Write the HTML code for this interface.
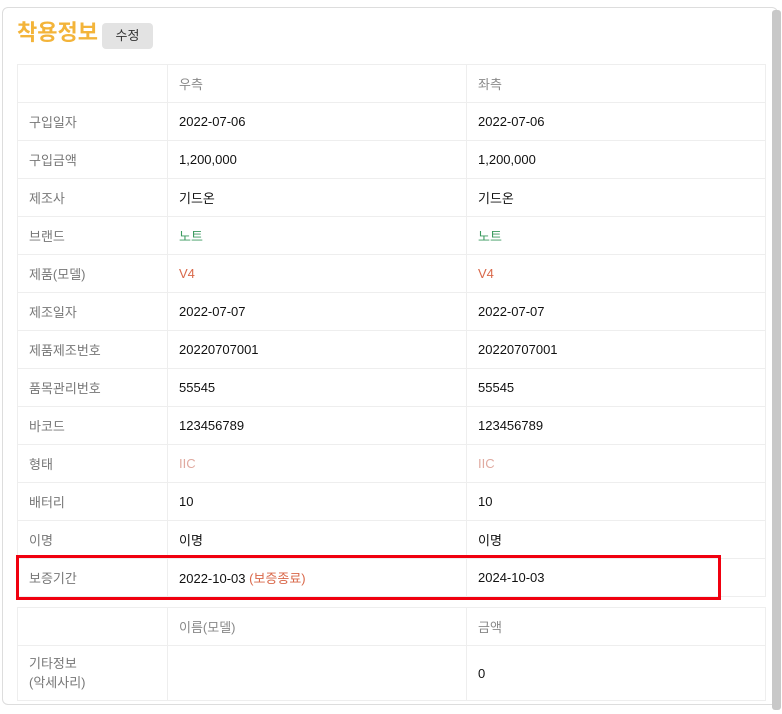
<!DOCTYPE html>
<html><head><meta charset="utf-8"><style>
body{margin:0;width:782px;height:714px;background:#fff;font-family:"Liberation Sans","Noto Sans CJK KR",sans-serif;position:relative;overflow:hidden}
.card{position:absolute;left:2px;top:7px;width:776px;height:698px;border:1px solid #ddd;border-radius:6px;box-sizing:border-box}
.sb{position:absolute;left:772px;top:10px;width:9px;height:700px;background:#c8c8c8;border-radius:3px}
h1{position:absolute;left:17px;top:18px;margin:0;font-size:22px;font-weight:bold;color:#f3b43a;line-height:30px}
.btn{position:absolute;left:102px;top:23px;width:51px;height:26px;background:#e3e3e3;border-radius:4px;font-size:13px;line-height:26px;text-align:center;color:#333}
table{position:absolute;left:17px;border-collapse:collapse;font-size:13px}
td{border:1px solid #eee;height:38px;padding:0 0 0 11px;box-sizing:border-box;color:#111}
td.l{color:#777;width:150px}
td.m{width:299px}
td.r{width:299px}
.h td{color:#888}
.g{color:#3c9b60}.o{color:#d9684a}.p{color:#e0aaa0}
.box{position:absolute;left:16px;top:555px;width:705px;height:45px;border:3px solid #f0000f;box-sizing:border-box}
</style></head><body>
<div class="card"></div><div class="sb"></div>
<h1>착용정보</h1><div class="btn">수정</div>
<table style="top:64px">
<tr class="h"><td class="l"></td><td class="m">우측</td><td class="r">좌측</td></tr>
<tr><td class="l">구입일자</td><td>2022-07-06</td><td>2022-07-06</td></tr>
<tr><td class="l">구입금액</td><td>1,200,000</td><td>1,200,000</td></tr>
<tr><td class="l">제조사</td><td>기드온</td><td>기드온</td></tr>
<tr><td class="l">브랜드</td><td class="g">노트</td><td class="g">노트</td></tr>
<tr><td class="l">제품(모델)</td><td class="o">V4</td><td class="o">V4</td></tr>
<tr><td class="l">제조일자</td><td>2022-07-07</td><td>2022-07-07</td></tr>
<tr><td class="l">제품제조번호</td><td>20220707001</td><td>20220707001</td></tr>
<tr><td class="l">품목관리번호</td><td>55545</td><td>55545</td></tr>
<tr><td class="l">바코드</td><td>123456789</td><td>123456789</td></tr>
<tr><td class="l">형태</td><td class="p">IIC</td><td class="p">IIC</td></tr>
<tr><td class="l">배터리</td><td>10</td><td>10</td></tr>
<tr><td class="l">이명</td><td>이명</td><td>이명</td></tr>
<tr><td class="l">보증기간</td><td>2022-10-03 <span class="o">(보증종료)</span></td><td>2024-10-03</td></tr>
</table>
<div class="box"></div>
<table style="top:607px">
<tr class="h"><td class="l"></td><td class="m">이름(모델)</td><td class="r">금액</td></tr>
<tr><td class="l" style="height:55px;line-height:19px">기타정보<br>(악세사리)</td><td></td><td>0</td></tr>
</table>
</body></html>
